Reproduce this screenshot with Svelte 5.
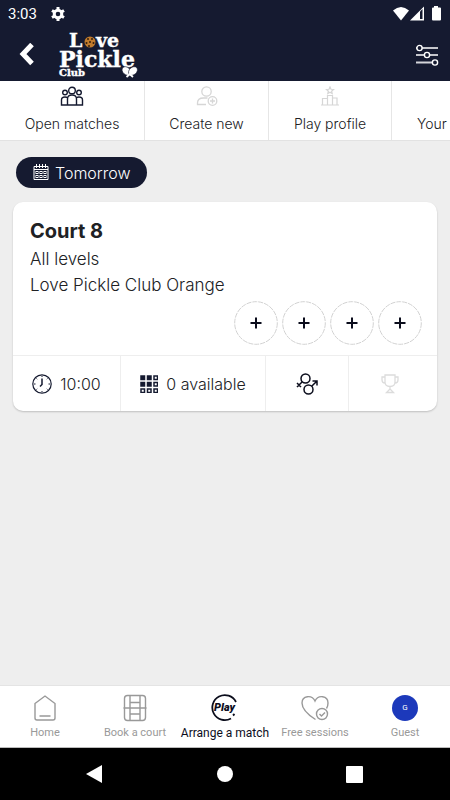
<script>
  const slots = [1, 2, 3, 4]
  const dots = [0, 1, 2]
</script>

<div class="app">
  <header>
    <div class="status">
      <span class="time">3:03</span>
      <svg class="gear" width="14" height="14" viewBox="0 0 14 14">
        <circle cx="7" cy="7" r="3.8" fill="none" stroke="#fff" stroke-width="3" />
        <path d="M7 0v3M7 11v3M1 3.5l2.5 1.5M10.5 9l2.5 1.5M1 10.5L3.5 9M10.5 5L13 3.5" stroke="#fff" stroke-width="3" />
      </svg>
      <svg class="signals" width="49" height="16" viewBox="0 0 49 16" fill="#fff">
        <path d="M0 4.5Q8 -2.5 16 4.5L8 14.5Z" />
        <path d="M17 14.5L31 .5V14.5Z" />
        <path d="M27 5.500L29.500 3V13H27Z" fill="#151a30" />
        <path d="M41 1.500V0h4v1.500h2q1 0 1 1V13.500q0 1-1 1h-7q-1 0-1-1V2.500q0-1 1-1Z" />
      </svg>
    </div>
    <div class="bar">
      <button class="icon-button" aria-label="Back">
        <svg width="16" height="24" viewBox="0 0 16 24">
          <path d="M14 1.500L5 11l9 9.500" fill="none" stroke="#fff" stroke-width="5" />
        </svg>
      </button>
      <svg class="logo" width="80" height="52" viewBox="0 0 80 52" role="img" aria-label="Love Pickle Club">
        <g class="logo-text" fill="#fff" stroke="#fff">
          <text x="11" y="18" font-size="19">L</text>
          <text x="38" y="18" font-size="19">ve</text>
          <text x="1" y="38" font-size="22">Pickle</text>
          <text x="1" y="47" font-size="10">Club</text>
        </g>
        <circle cx="32" cy="13" r="5.500" fill="#c07b2d" />
        <g fill="#38200d">
          <circle cx="30" cy="10" r="1" /><circle cx="34" cy="10" r="1" />
          <circle cx="28.500" cy="14" r="1" /><circle cx="32" cy="13" r="1" />
          <circle cx="35.500" cy="14" r="1" /><circle cx="31" cy="17" r="1" />
        </g>
        <g fill="#fff" stroke="#151a30" stroke-width=".6">
          <ellipse cx="68.500" cy="42" rx="3.700" ry="5" transform="rotate(-48 68.500 42)" />
          <ellipse cx="75" cy="42" rx="3.700" ry="5" transform="rotate(48 75 42)" />
        </g>
        <path d="M71 44.500l4 3.500M72.500 44.500l-4 3.500" stroke="#fff" stroke-width="1.800" />
      </svg>
      <button class="icon-button filter" aria-label="Filters">
        <svg width="24" height="22" viewBox="0 0 24 22" fill="none" stroke="#fff" stroke-width="1.400">
          <path d="M1 4h1M7 4h16M1 11h8M15 11h8" />
          <path d="M1 18.500h16" stroke-width="2" stroke="#d4d5da" />
          <circle cx="4.500" cy="4" r="2.600" />
          <circle cx="12" cy="11" r="2.600" />
          <circle cx="20" cy="18.500" r="2.600" />
        </svg>
      </button>
    </div>
  </header>

  <nav class="tabs">
    <a href="#open" class="active">
      <svg width="24" height="20" viewBox="0 0 24 20" fill="none" stroke="currentColor" stroke-width="1.400">
        <circle cx="12" cy="4.500" r="3.300" />
        <circle cx="5" cy="6.500" r="2.300" />
        <circle cx="19" cy="6.500" r="2.300" />
        <path d="M7.500 19v-6q0-4 4.500-4t4.500 4v6zM7.500 19h-6v-5q0-3 3.500-3 1.500 0 2.500.8M16.500 19h6v-5q0-3-3.500-3-1.500 0-2.500.8" />
      </svg>
      <span>Open matches</span>
    </a>
    <a href="#new">
      <svg width="22" height="20" viewBox="0 0 22 20" fill="none" stroke="currentColor" stroke-width="1.300">
        <circle cx="10.500" cy="5.500" r="4.700" />
        <path d="M10 18.500H1.500V17q0-5 6-5h4" />
        <circle cx="16.500" cy="15" r="4.300" />
        <path d="M14 15h5M16.500 12.500v5" />
      </svg>
      <span>Create new</span>
    </a>
    <a href="#profile">
      <svg width="20" height="20" viewBox="0 0 20 20" fill="none" stroke="currentColor" stroke-width="1.200">
        <path d="M1 19h18M2.500 19v-6.500H7M7.500 19V9.500h5V19M13 12h4v7" />
        <path d="M10 1l1 2.300 2.500.2-1.900 1.700.6 2.400L10 6.300 7.800 7.600l.6-2.400-1.900-1.700L9 3.300z" />
      </svg>
      <span>Play profile</span>
    </a>
    <a href="#your" class="cut">
      <span>Your</span>
    </a>
  </nav>

  <main>
    <button class="day">
      <svg width="16" height="17" viewBox="0 0 16 17" fill="none" stroke="currentColor">
        <path d="M1 2.500h14v13H1zM1 5.500h14M3.500 0v4M6.500 0v4M9.500 0v4M12.500 0v4" />
        {#each dots as x}
          <rect x={3 + x * 4} y="7.500" width="2" height="2" />
          <rect x={3 + x * 4} y="11.500" width="2" height="2" />
        {/each}
      </svg>
      Tomorrow
    </button>

    <article>
      <div class="info">
        <h2>Court 8</h2>
        <p>All levels</p>
        <p>Love Pickle Club Orange</p>
        <div class="slots">
          {#each slots as slot}
            <button aria-label="Join place {slot}">
              <svg width="44" height="44" viewBox="0 0 44 44" fill="none">
                <circle cx="22" cy="22" r="21.300" stroke="#d2d2d2" stroke-dasharray="5 1" />
                <path d="M22 16.500v11M16.500 22h11" stroke="#0b0d1c" stroke-width="2" />
              </svg>
            </button>
          {/each}
        </div>
      </div>
      <footer>
        <div>
          <svg width="20" height="20" viewBox="0 0 20 20" fill="none" stroke="#151a30">
            <circle cx="10" cy="10" r="9.200" stroke-width="1.200" />
            <path d="M10 4.500v6l-2 2" stroke-width="1.500" />
            <path d="M10 2v1M10 17v1M2 10h1.500M16.500 10H18M4.500 4.500l.7.700M14.800 14.800l.7.700M15.500 4.500l-.7.700M5.200 14.800l-.7.700" />
          </svg>
          <span>10:00</span>
        </div>
        <div>
          <svg width="18" height="18" viewBox="0 0 18 18" stroke="#151a30" stroke-width="1.500">
            {#each dots as y}
              {#each dots as x}
                <rect x={1 + x * 6.5} y={1 + y * 6.5} width="3.500" height="3.500" fill={x < 2 && y < 2 ? '#151a30' : '#fff'} />
              {/each}
            {/each}
          </svg>
          <span>0 available</span>
        </div>
        <div>
          <svg width="22" height="22" viewBox="0 0 22 22" fill="none" stroke="#0b0d1c" stroke-width="1.500">
            <circle cx="9.500" cy="5.500" r="4.500" />
            <circle cx="12.500" cy="16.500" r="4.500" />
            <path d="M6.300 8.700L1 14M1 10l4 4M15.700 13.300L21 8M16.500 8H21V12.500" />
          </svg>
        </div>
        <div>
          <svg width="18" height="20" viewBox="0 0 18 20" fill="none" stroke="#dcdcdc" stroke-width="1.300">
            <path d="M4 1h10v7q0 4.500-5 4.500T4 8zM4 3H1v3q0 3 3 3M14 3h3v3q0 3-3 3M9 12.500V16M9 15l-3.500 3.500h7z" />
          </svg>
        </div>
      </footer>
    </article>
  </main>

  <nav class="bottom">
    <a href="#home">
      <svg width="28" height="28" viewBox="0 0 28 28" fill="none" stroke="currentColor" stroke-width="1.400">
        <path d="M4 9.500L14 2l10 7.500v14.500q0 2-2 2h-16q-2 0-2-2V9.500zM8.500 22h11" />
      </svg>
      <span>Home</span>
    </a>
    <a href="#book">
      <svg width="28" height="28" viewBox="0 0 28 28" fill="none" stroke="currentColor" stroke-width="1.400">
        <rect x="3.500" y="1.500" width="21" height="25" rx="3" />
        <path d="M9 1.500v25M19 1.500v25M2.500 14h23M9 8.500h10M9 20h10" />
      </svg>
      <span>Book a court</span>
    </a>
    <a href="#arrange" class="active">
      <svg width="28" height="28" viewBox="0 0 28 28" fill="none" stroke="currentColor" stroke-width="1.800">
        <path d="M25 8A12.500 12.500 0 1 0 20 24.500M22 21.500l1.500-1.500" />
        <text class="play" x="3" y="17" fill="currentColor" stroke="none">Play</text>
      </svg>
      <span>Arrange a match</span>
    </a>
    <a href="#sessions">
      <svg width="28" height="28" viewBox="0 0 28 28" fill="none" stroke="currentColor" stroke-width="1.400">
        <path d="M14.500 25.500C9 22 1 16 1 9 1 1.500 11 .5 14 7c3-6.500 13-5.500 13 2 0 2-.5 4-1.500 5.500" />
        <circle cx="21" cy="20" r="5.500" />
        <path d="M18.500 20l2 2 3.500-3.500" />
      </svg>
      <span>Free sessions</span>
    </a>
    <a href="#guest">
      <b>G</b>
      <span>Guest</span>
    </a>
  </nav>

  <div class="system">
    <button aria-label="System back">
      <svg width="18" height="18" viewBox="0 0 18 18"><path d="M0 9l16-9v18z" fill="#fff" /></svg>
    </button>
    <button aria-label="System home">
      <svg width="18" height="18" viewBox="0 0 18 18"><circle cx="9" cy="9" r="8" fill="#fff" /></svg>
    </button>
    <button aria-label="Recent apps">
      <svg width="18" height="18" viewBox="0 0 18 18"><rect x="0" y="1" width="17" height="17" rx="1" fill="#fff" /></svg>
    </button>
  </div>
</div>

<style>
  :global(body) {
    margin: 0;
    background: #eee;
  }

  .app {
    min-height: 100vh;
    display: flex;
    flex-direction: column;
    overflow: hidden;
    color: #202124;
    font-family: Inter, sans-serif;
    font-weight: 300;
  }

  svg {
    display: block;
    flex: none;
  }

  a {
    color: inherit;
    text-decoration: none;
  }

  button {
    padding: 0;
    border: none;
    background: none;
    color: inherit;
    font: inherit;
    cursor: pointer;
  }

  header {
    background: #151a30;
    color: #fff;
  }

  .status {
    height: 28px;
    padding: 0 8px;
    display: flex;
    align-items: center;
    gap: 14px;
    font: 400 15px Roboto, sans-serif;
  }

  .signals {
    margin-left: auto;
  }

  .bar {
    height: 53px;
    padding: 0 11px 0 18px;
    display: flex;
    align-items: center;
    gap: 24px;
  }

  .filter {
    margin-left: auto;
  }

  .logo-text {
    font-family: 'DejaVu Serif', serif;
    font-weight: bold;
    stroke-width: .4px;
  }

  .tabs {
    display: grid;
    grid-template-columns: 145px 124px 123px 124px;
    height: 59px;
    background: #fff;
    border-bottom: 1px solid #e2e2e2;
    font-size: 14px;
  }

  .tabs a {
    display: flex;
    flex-direction: column;
    align-items: center;
    justify-content: space-between;
    padding: 5px 0 6px;
    border-right: 1px solid #e6e6e6;
    color: #d6d6d6;
  }

  .tabs a.active {
    color: #151a30;
  }

  .tabs a.cut {
    align-items: flex-start;
    justify-content: flex-end;
    padding-left: 25px;
  }

  .tabs span {
    color: #202124;
    line-height: 20px;
  }

  main {
    flex: 1;
    padding: 16px 13px;
    background: #eee;
  }

  .day {
    display: flex;
    align-items: center;
    gap: 6px;
    height: 31px;
    margin: 0 3px 14px;
    padding: 0 17px;
    border-radius: 16px;
    background: #151a30;
    color: #fff;
    font-size: 16px;
  }

  article {
    background: #fff;
    border-radius: 10px;
    box-shadow: 0 1px 2px rgba(0, 0, 0, .2);
  }

  .info {
    padding: 16px 15px 10px 17px;
    font-size: 17px;
  }

  h2 {
    margin: 0 0 2px;
    font-size: 20px;
    font-weight: 700;
    line-height: 26px;
  }

  p {
    margin: 0;
    line-height: 26px;
  }

  .slots {
    display: flex;
    justify-content: flex-end;
    gap: 4px;
    margin-top: 3px;
  }

  footer {
    display: grid;
    grid-template-columns: 107fr 145fr 83fr 89fr;
    height: 55px;
    border-top: 1px solid #eee;
    font-size: 16px;
  }

  footer div {
    display: flex;
    align-items: center;
    justify-content: center;
    gap: 8px;
  }

  footer div + div {
    border-left: 1px solid #eee;
  }

  footer div:last-child {
    padding-right: 6px;
  }

  .bottom {
    display: grid;
    grid-template-columns: repeat(5, 1fr);
    height: 61px;
    background: #fff;
    border-top: 1px solid #e4e4e4;
    border-bottom: 1px solid #bbb;
    color: #999;
    font: 400 11px Roboto, sans-serif;
  }

  .bottom a {
    display: flex;
    flex-direction: column;
    align-items: center;
    gap: 3px;
    padding-top: 8px;
    line-height: 16px;
    white-space: nowrap;
  }

  .bottom .active {
    color: #0b0d1c;
    font-size: 12px;
  }

  .play {
    font: italic 900 11px Roboto, sans-serif;
  }

  b {
    width: 26px;
    height: 26px;
    margin: 1px;
    border-radius: 50%;
    background: #1c39bb;
    color: #fff;
    font-size: 8px;
    font-weight: 400;
    line-height: 26px;
    text-align: center;
  }

  .system {
    display: flex;
    align-items: center;
    justify-content: center;
    gap: 112px;
    height: 52px;
    background: #000;
  }
</style>
